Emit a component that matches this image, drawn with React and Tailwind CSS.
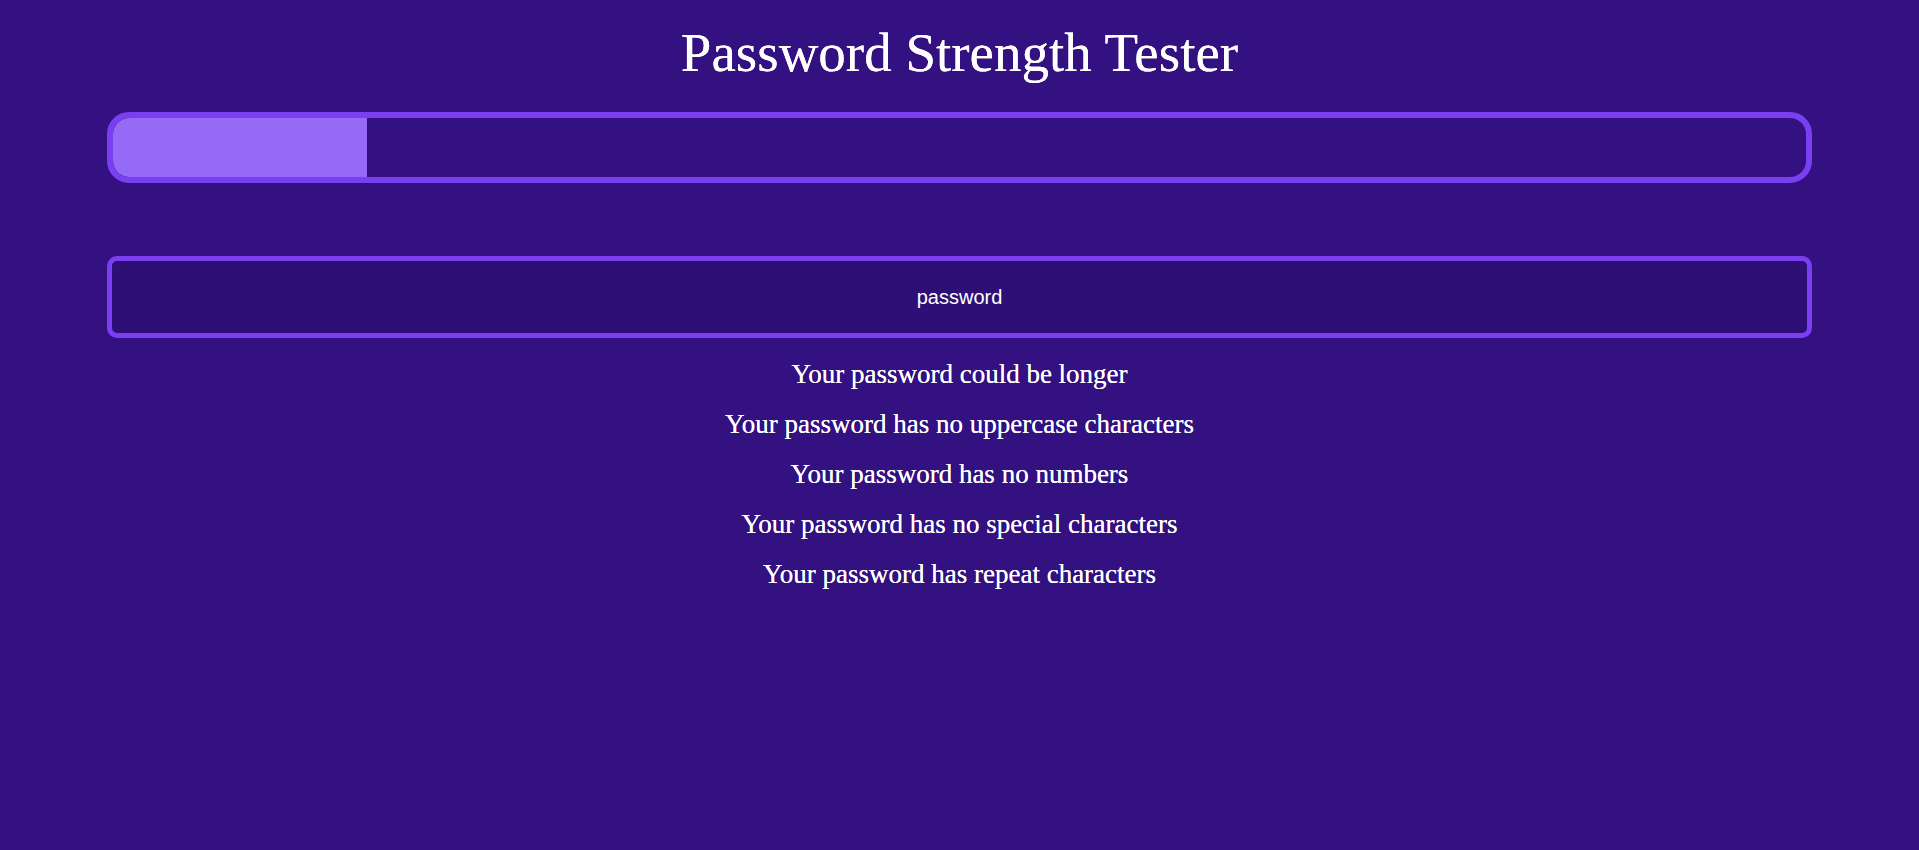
import React from 'react';

const messages = [
  'Your password could be longer',
  'Your password has no uppercase characters',
  'Your password has no numbers',
  'Your password has no special characters',
  'Your password has repeat characters',
];

export default function App() {
  const strength = 15;

  return (
    <div className="min-h-[850px] bg-[#331180] text-white" style={{ fontFamily: '"Liberation Serif", serif' }}>
      <div className="mx-[107px] flex flex-col items-center">
        <h1 className="mt-[22px] text-[55px] leading-[62px] [text-shadow:0_0_0.6px_white]">Password Strength Tester</h1>
        <div className="mt-[28px] h-[71px] w-full overflow-hidden rounded-[22px] border-[6px] border-[#7a3ff0]">
          <div className="h-full rounded-l-[16px] bg-[#946af6]" style={{ width: `${strength}%` }} />
        </div>
        <input
          type="text"
          defaultValue="password"
          className="mt-[73px] h-[82px] w-full rounded-[10px] border-[5px] border-[#7a3ff0] bg-[#2e0f76] text-center text-[20px] text-white outline-none"
          style={{ fontFamily: '"Liberation Sans", Arial, sans-serif' }}
        />
        <ul className="mt-[22px] flex flex-col items-center gap-[21px] text-[27px] leading-[29px] [text-shadow:0_0_0.5px_white]">
          {messages.map((m) => (
            <li key={m}>{m}</li>
          ))}
        </ul>
      </div>
    </div>
  );
}
